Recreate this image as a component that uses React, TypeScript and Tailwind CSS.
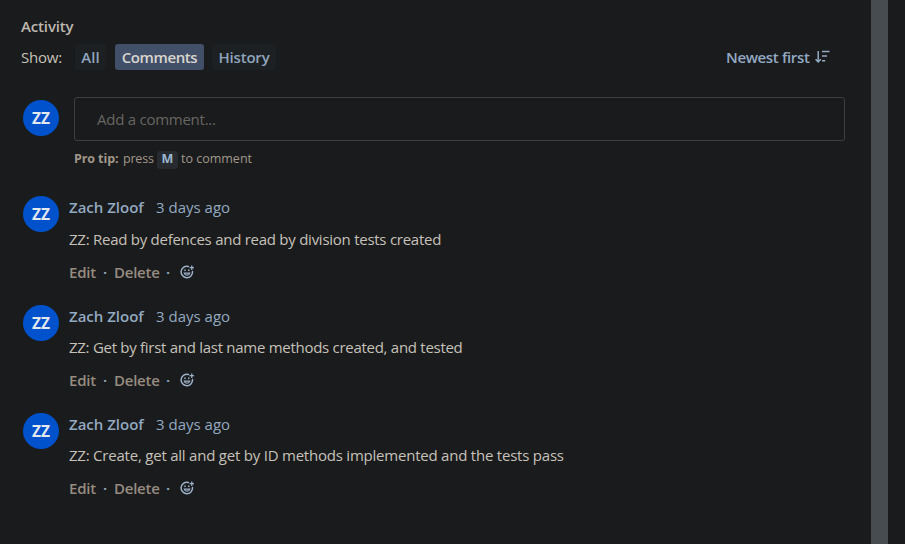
import React from 'react';

const comments = [
  { text: 'ZZ: Read by defences and read by division tests created', tracking: 'tracking-[-0.26px]', gap: 'mt-[27px] h-[88px]', body: 'mt-3' },
  { text: 'ZZ: Get by first and last name methods created, and tested', tracking: 'tracking-[-0.28px]', gap: 'mt-[21px] h-[88px]', body: 'mt-[11px]' },
  { text: 'ZZ: Create, get all and get by ID methods implemented and the tests pass', tracking: 'tracking-[-0.22px]', gap: 'mt-[20px] h-[88px]', body: 'mt-[11px]' },
];

function Avatar() {
  return (
    <div className="flex h-9 w-9 shrink-0 items-center justify-center rounded-full bg-[#0052cc] text-[15.5px] leading-none font-bold text-[#e4e9f0]">
      <span className="pt-px">ZZ</span>
    </div>
  );
}

function SortIcon() {
  return (
    <svg width="16" height="14" viewBox="0 0 16 14" fill="none" stroke="#93a9c2" strokeWidth="1.5">
      <path d="M4.2 1v10.5M1.6 9.3l2.6 2.6 2.6-2.6" />
      <path d="M8 1.5h7.5M8 6h5M8 10.8h3.2" />
    </svg>
  );
}

function ReactionIcon() {
  return (
    <svg width="14" height="14" viewBox="0 0 14 14" fill="none" stroke="#9cb1c8" strokeWidth="1.5" strokeLinecap="round">
      <path d="M8.4 1.5A5.7 5.7 0 1 0 12.5 6.5" />
      <path d="M4.2 8.1c.7 2.7 4.9 2.7 5.6 0z" strokeWidth="1.1" />
      <path d="M5 4.9v.6M8.8 4.9v.6" strokeWidth="1.5" />
      <path d="M11.8 1v3.4M10.1 2.7h3.4" strokeWidth="1.3" />
    </svg>
  );
}

export default function App() {
  return (
    <div className="flex h-[544px] w-[905px] overflow-hidden bg-[#1a1b1d] font-['Open_Sans','Noto_Sans',sans-serif] text-[15px] whitespace-nowrap text-[#c6c1b9]">
      <main className="w-[871px] pt-[16px] pl-[21px]">
        <h2 className="h-5 leading-5 font-semibold tracking-[-0.15px] text-[#bdb7af]">Activity</h2>

        <div className="mt-[8px] flex h-[26px] items-center leading-[24px]">
          <span className="w-[54px] tracking-[-0.2px]">Show:</span>
          <button className="h-[26px] w-[31px] rounded-[3px] bg-[#1d2023] pb-px font-semibold text-[#8fa5bd]">All</button>
          <button className="ml-[9px] h-[26px] w-[89px] rounded-[3px] bg-[#424f68] pb-px font-semibold tracking-[-0.4px] text-[#d8d5cf]">Comments</button>
          <button className="ml-2 h-[26px] w-16 rounded-[3px] bg-[#1d2023] pb-px font-semibold tracking-[-0.2px] text-[#8fa5bd]">History</button>
          <button className="ml-[450px] flex items-center font-semibold tracking-[-0.35px] text-[#93a9c2]">
            <span className="w-[88px] text-left">Newest first</span>
            <SortIcon />
          </button>
        </div>

        <div className="mt-[27px] flex pl-[2px]">
          <div className="pt-[3px]"><Avatar /></div>
          <div className="ml-[15px]">
            <div className="flex h-11 w-[771px] items-center rounded-[3px] border border-[#3b3f42] pl-[22px] tracking-[-0.25px] text-[#686661]">Add a comment...</div>
            <div className="mt-[9px] flex h-[19px] items-center text-[12.5px] text-[#a1988a]">
              <span className="w-[49px] font-bold tracking-[-0.1px]">Pro tip:</span>
              <span className="w-[34px] tracking-[-0.2px]">press</span>
              <kbd className="flex h-[18px] w-[21px] items-center justify-center rounded-[3px] bg-[#272b2f] font-['Open_Sans',sans-serif] font-bold text-[#9db7d1]">M</kbd>
              <span className="ml-[3px]">to comment</span>
            </div>
          </div>
        </div>

        {comments.map((comment) => (
          <article key={comment.text} className={`flex pl-[2px] ${comment.gap}`}>
            <Avatar />
            <div className="ml-[10px] pt-[1px]">
              <div className="flex h-5 leading-5 text-[#93a9c0]">
                <span className="w-[87px] font-semibold">Zach Zloof</span>
                <span>3 days ago</span>
              </div>
              <p className={`h-5 leading-5 ${comment.body} ${comment.tracking}`}>{comment.text}</p>
              <div className="mt-[13px] flex h-5 items-center leading-5 font-semibold text-[#968c80]">
                <span className="w-[34px] tracking-[-0.2px]">Edit</span>
                <span className="w-[11px] text-[#93a9c0]">·</span>
                <span className="w-[52px] tracking-[-0.25px]">Delete</span>
                <span className="w-[14px] text-[#93a9c0]">·</span>
                <ReactionIcon />
              </div>
            </div>
          </article>
        ))}
      </main>
      <div className="h-full w-[17px] bg-[#464c4f]" />
      <div className="h-full w-[17px] bg-[#1a1b1d]" />
    </div>
  );
}
